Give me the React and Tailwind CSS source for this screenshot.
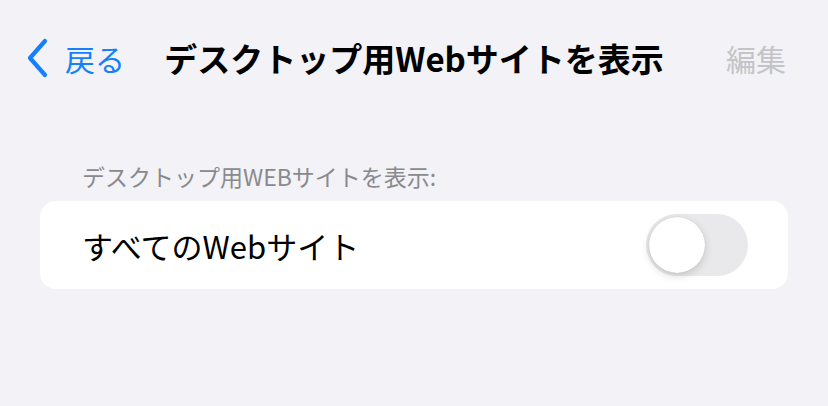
import React from "react";

const jp = { fontFamily: '"Noto Sans CJK JP", "Noto Sans", sans-serif' };

function Toggle() {
  return (
    <div className="w-[102px] h-[62px] rounded-full bg-[#e9e9eb] p-[3px] flex items-center">
      <div className="w-[56px] h-[56px] rounded-full bg-white shadow-[0_3px_8px_rgba(0,0,0,0.15),0_0_1px_rgba(0,0,0,0.2)]" />
    </div>
  );
}

export default function App() {
  return (
    <div className="w-[828px] h-[406px] bg-[#f2f2f7] overflow-hidden" style={jp}>
      {/* nav bar */}
      <div className="pt-[38px] grid grid-cols-[1fr_auto_1fr] items-center h-[78px]">
        <div className="flex items-center pl-[26px]">
          <svg width="24" height="40" viewBox="0 0 24 40" className="mr-[15px]">
            <path d="M19 3 L4 20 L19 37" fill="none" stroke="#167ffc" strokeWidth="4.2" strokeLinecap="round" strokeLinejoin="round" />
          </svg>
          <span className="text-[30px] text-[#167ffc] leading-none">戻る</span>
        </div>
        <span className="text-[33px] font-bold text-black leading-none">デスクトップ用Webサイトを表示</span>
        <div className="flex justify-end pr-[42px]">
          <span className="text-[30px] text-[#c4c4c7] leading-none">編集</span>
        </div>
      </div>

      {/* section */}
      <div className="px-[40px] mt-[87px]">
        <div className="pl-[42px] text-[23px] text-[#8a8a8e] leading-[22px]">デスクトップ用WEBサイトを表示:</div>
        <div className="mt-[14px] h-[88px] bg-white rounded-[16px] flex items-center justify-between pl-[42px] pr-[40px]">
          <span className="text-[31px] text-black leading-none">すべてのWebサイト</span>
          <Toggle />
        </div>
      </div>
    </div>
  );
}
